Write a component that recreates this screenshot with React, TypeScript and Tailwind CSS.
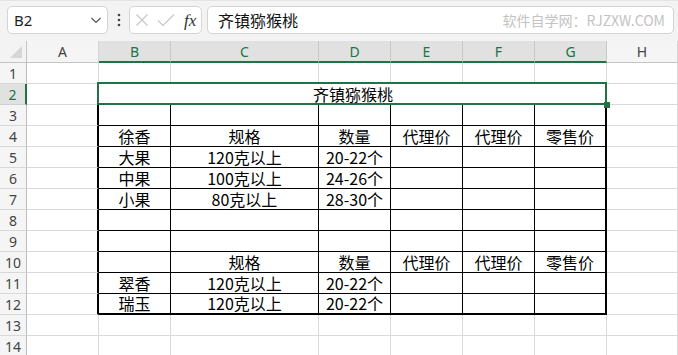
import React from "react";

const GREEN = "#217346";

const data: Record<number, string[]> = {
  4: ["徐香", "规格", "数量", "代理价", "代理价", "零售价"],
  5: ["大果", "120克以上", "20-22个", "", "", ""],
  6: ["中果", "100克以上", "24-26个", "", "", ""],
  7: ["小果", "80克以上", "28-30个", "", "", ""],
  10: ["", "规格", "数量", "代理价", "代理价", "零售价"],
  11: ["翠香", "120克以上", "20-22个", "", "", ""],
  12: ["瑞玉", "120克以上", "20-22个", "", "", ""],
};

const colLetters = ["A", "B", "C", "D", "E", "F", "G", "H"];

function cellBorder(r: number, c: number): string {
  const inTable = r >= 3 && r <= 12 && c >= 1 && c <= 6;
  if (inTable) {
    if (c === 6 && r === 12) return "border-r-2 border-b-2 border-black";
    if (c === 6) return "border-r-2 border-b border-black";
    if (r === 12) return "border-r border-b-2 border-black";
    return "border-r border-b border-black";
  }
  if (c === 0 && r >= 3 && r <= 12) return "border-r-2 border-b border-r-black border-b-[#dadada]";
  return "border-r border-b border-[#dadada]";
}

function Toolbar() {
  return (
    <div className="h-[41px] bg-[#f3f3f3] border-t border-[#e4e4e4] flex items-start pt-[5px] pl-[7px]">
      <div className="w-[101px] h-[28px] bg-white border border-[#d4d4d4] rounded-[5px] flex items-center justify-between pl-[6px] pr-[5px]">
        <span className="text-[15px] text-[#1f1f1f] leading-none" style={{ fontFamily: "'Noto Sans', sans-serif" }}>B2</span>
        <svg width="12" height="12" viewBox="0 0 12 12">
          <path d="M1.5 4 L6 8.5 L10.5 4" fill="none" stroke="#555" strokeWidth="1.2" />
        </svg>
      </div>
      <div className="w-[21px] h-[28px] flex items-center justify-center">
        <svg width="4" height="14" viewBox="0 0 4 14">
          <circle cx="2" cy="2" r="1.3" fill="#444" />
          <circle cx="2" cy="7" r="1.3" fill="#444" />
          <circle cx="2" cy="12" r="1.3" fill="#444" />
        </svg>
      </div>
      <div className="w-[73px] h-[28px] bg-white border border-[#d4d4d4] rounded-[5px] flex items-center pl-[5px]">
        <svg width="14" height="14" viewBox="0 0 14 14">
          <path d="M1.5 1.5 L12.5 12.5 M12.5 1.5 L1.5 12.5" stroke="#c6c6c6" strokeWidth="1.1" fill="none" />
        </svg>
        <svg width="18" height="14" viewBox="0 0 18 14" className="ml-[8px]">
          <path d="M1 7.5 L6 12.5 L17 1.5" stroke="#c6c6c6" strokeWidth="1.1" fill="none" />
        </svg>
        <span className="ml-[9px] text-[17px] italic text-[#333] leading-none" style={{ fontFamily: "'Liberation Serif', serif" }}>fx</span>
      </div>
      <div className="ml-[5px] w-[467px] h-[28px] bg-white border border-[#d4d4d4] rounded-[5px] flex items-center pl-[10px] pr-[8px] justify-between">
        <span className="text-[16px] text-[#111] leading-none" style={{ fontFamily: "'Noto Sans CJK SC', sans-serif" }}>齐镇猕猴桃</span>
        <span className="text-[14px] text-[#c3c3c3] leading-none" style={{ fontFamily: "'Noto Sans CJK SC', sans-serif" }}>软件自学网：RJZXW.COM</span>
      </div>
    </div>
  );
}

export default function App() {
  const rows = Array.from({ length: 14 }, (_, i) => i + 1);
  return (
    <div className="relative w-[678px] h-[355px] overflow-hidden bg-white">
      <Toolbar />
      <div
        className="grid grid-cols-[27px_72px_72px_148px_72px_72px_72px_72px_71px] grid-rows-[22px_repeat(14,21px)]"
        style={{ fontFamily: "'Noto Sans CJK SC', sans-serif" }}
      >
        {/* corner */}
        <div className="bg-[#f3f3f3] border-r border-b border-[#c4c4c4] flex items-end justify-end pr-[4px] pb-[4px]">
          <svg width="12" height="12" viewBox="0 0 12 12">
            <path d="M12 0 L12 12 L0 12 Z" fill="#d6d6d6" />
          </svg>
        </div>
        {colLetters.map((l, i) => {
          const sel = i >= 1 && i <= 6;
          return (
            <div
              key={l}
              className={
                sel
                  ? "bg-[#e1e1e1] border-r border-r-[#c8c8c8] border-b-2 border-b-[#217346] flex items-center justify-center text-[14px] text-[#217346]"
                  : "bg-[#f5f5f5] border-r border-r-[#d4d4d4] border-b border-b-[#c4c4c4] flex items-center justify-center text-[14px] text-[#444]"
              }
              style={{ fontFamily: "'Noto Sans', sans-serif" }}
            >
              {l}
            </div>
          );
        })}
        {rows.map((r) => (
          <React.Fragment key={r}>
            <div
              className={
                r === 2
                  ? "bg-[#e1e1e1] border-r-2 border-r-[#217346] border-b border-b-[#d0d0d0] flex items-center justify-center text-[14px] text-[#217346]"
                  : "bg-[#f5f5f5] border-r border-r-[#bdbdbd] border-b border-b-[#d8d8d8] flex items-center justify-center text-[14px] text-[#444]"
              }
              style={{ fontFamily: "'Noto Sans', sans-serif" }}
            >
              {r}
            </div>
            {r === 2 ? (
              <>
                <div className="border-r border-b border-[#dadada]" />
                <div className="col-span-6 border-b border-black flex items-end justify-center text-[16px] leading-[20px] text-black whitespace-nowrap">
                  齐镇猕猴桃
                </div>
                <div className="border-r border-b border-[#dadada]" />
              </>
            ) : (
              colLetters.map((l, c) => {
                const v = c >= 1 && c <= 6 && data[r] ? data[r][c - 1] : "";
                return (
                  <div
                    key={l}
                    className={
                      "flex items-end justify-center overflow-hidden whitespace-nowrap text-[16px] leading-[20px] text-black " +
                      cellBorder(r, c)
                    }
                  >
                    {v}
                  </div>
                );
              })
            )}
          </React.Fragment>
        ))}
      </div>
      {/* selection */}
      <div className="absolute left-[97px] top-[82px] w-[510px] h-[23px] border-2 border-[#217346] pointer-events-none" />
      <div className="absolute left-[604px] top-[102px] w-[6px] h-[6px] bg-[#217346]" />
    </div>
  );
}
